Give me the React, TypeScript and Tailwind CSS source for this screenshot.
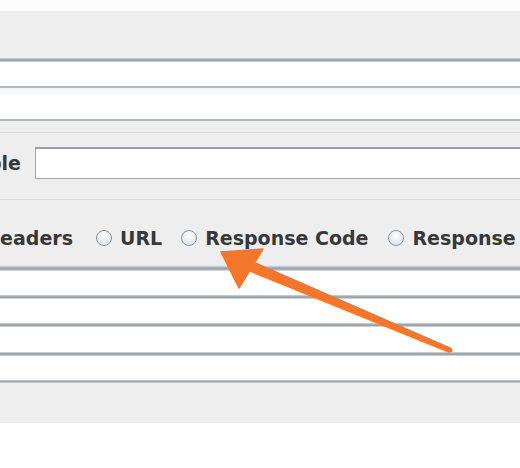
import React from 'react';

const font = { fontFamily: '"DejaVu Sans", Verdana, sans-serif' };

// double border line between the stacked fields
function Sep({ h = 4 }: { h?: number }) {
  const cls =
    h === 5
      ? 'h-[5px]'
      : h === 3
      ? 'h-[3px]'
      : h === 2
      ? 'h-[2px]'
      : 'h-[4px]';
  return (
    <div
      className={`${cls} w-full bg-[linear-gradient(to_bottom,#d6dde6,#a3a9b0_35%,#9aa0a7_60%,#dfe5ec)]`}
    />
  );
}

function Radio({ label }: { label: string }) {
  return (
    <div className="flex items-center shrink-0">
      <div className="w-[16px] h-[16px] rounded-full border border-[#8c939b] bg-[radial-gradient(circle_at_50%_35%,#ffffff,#d2dbe4)]" />
      <span className="ml-[8px] whitespace-nowrap">{label}</span>
    </div>
  );
}

export default function App() {
  return (
    <div
      className="relative w-[520px] h-[468px] overflow-hidden bg-white text-[19px] font-bold text-[#383838]"
      style={font}
    >
      <div className="flex flex-col">
        <div className="h-[11px] bg-[#fdfdfd]" />
        <div className="h-[47px] bg-[#eeeeee]" />
        <Sep />
        <div className="h-[24px] bg-white" />
        <Sep h={2} />
        <div className="h-[31px] bg-[linear-gradient(to_bottom,#f3f4f5,#ffffff_30%)]" />
        <Sep h={2} />
        <div className="h-[11px] bg-[#eeeeee]" />
        <div className="h-[1px] bg-[#d3dde8]" />

        {/* variable name row */}
        <div className="h-[66px] bg-[#eeeeee] flex items-start pt-[14px]">
          <div className="w-[21px] h-[32px] overflow-hidden flex justify-end items-center shrink-0">
            <span className="whitespace-nowrap">Variable</span>
          </div>
          <div className="ml-[14px] w-[600px] h-[32px] bg-white border border-[#a0a6ad] border-t-2 border-t-[#9aa0a7] shrink-0" />
        </div>
        <div className="h-[1px] bg-[#d3dde8]" />

        {/* field to test radios */}
        <div className="h-[65px] bg-[#eeeeee] flex items-center pt-[11px]">
          <div className="w-[73px] overflow-hidden flex justify-end shrink-0">
            <span className="whitespace-nowrap">Headers</span>
          </div>
          <div className="ml-[23px]">
            <Radio label="URL" />
          </div>
          <div className="ml-[19px]">
            <Radio label="Response Code" />
          </div>
          <div className="ml-[20px]">
            <Radio label="Response Message" />
          </div>
        </div>

        <div className="h-[1px] bg-[#e4e9ef]" />
        <Sep h={5} />
        <div className="h-[24px] bg-white" />
        <Sep />
        <div className="h-[24px] bg-white" />
        <Sep />
        <div className="h-[25px] bg-white" />
        <Sep />
        <div className="h-[24px] bg-white" />
        <Sep h={3} />
        <div className="h-[40px] bg-[#eeeeee]" />
        <div className="h-[45px] bg-white" />
      </div>

      {/* annotation arrow */}
      <svg className="absolute inset-0" width="520" height="468" viewBox="0 0 520 468">
        <polygon
          points="221,252 263,249 254.6,262.6 451,348.5 452,351 449,352 249.6,270.8 239,288"
          fill="#f4762d"
          stroke="#f4762d"
          strokeWidth="1.5"
          strokeLinejoin="round"
        />
      </svg>
    </div>
  );
}
